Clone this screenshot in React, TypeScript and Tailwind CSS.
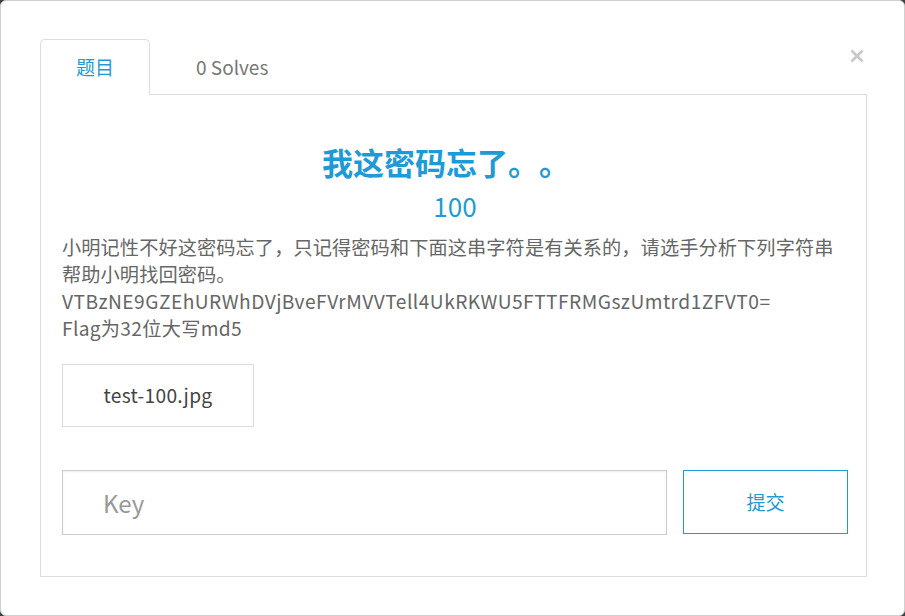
import React from "react";

const font = { fontFamily: '"Noto Sans CJK SC", "Noto Sans", sans-serif' };

export default function App() {
  return (
    <div className="w-[905px] h-[616px] bg-[#3a3f44]" style={font}>
      <div className="relative w-[905px] h-[616px] bg-white rounded-[6px] border border-[#d0d0d0] pt-[38px] pl-[39px] pr-[37px]">
        <svg className="absolute left-[849px] top-[48px]" width="14" height="14" viewBox="0 0 14 14">
          <path d="M1.5 1.5 L12.5 12.5 M12.5 1.5 L1.5 12.5" stroke="#c9c9c9" strokeWidth="2.8" strokeLinecap="butt" />
        </svg>
        <div className="flex h-[56px]">
          <div className="w-[110px] h-[56px] border border-b-0 border-[#dddddd] rounded-t-[5px] bg-white flex items-center justify-center text-[19px] text-[#1e9bd6] relative z-10">
            题目
          </div>
          <div className="pl-[46px] flex items-center text-[19px] text-[#777]">0 Solves</div>
        </div>
        <div className="-mt-px border border-[#dddddd] h-[483px] pl-[21px] pr-[18px]">
          <div className="mt-[47px] text-center text-[31px] leading-[40px] font-bold text-[#1e9bd6] [text-spacing-trim:space-all] pr-[18px]">
            我这密码忘了。。
          </div>
          <div className="mt-[7px] text-center text-[26px] leading-[34px] text-[#1e9bd6]">100</div>
          <div className="mt-[11px] text-[19.2px] leading-[27px] text-[#666] tracking-[0.1px]">
            小明记性不好这密码忘了，只记得密码和下面这串字符是有关系的，请选手分析下列字符串帮助小明找回密码。
            <br />
            <span className="tracking-[0.45px]">VTBzNE9GZEhURWhDVjBveFVrMVVTell4UkRKWU5FTTFRMGszUmtrd1ZFVT0=</span>
            <br />
            <span className="tracking-[0.3px]">Flag为32位大写md5</span>
          </div>
          <div className="mt-[22px] w-[192px] h-[63px] border border-[#dddddd] flex items-center justify-center text-[19.2px] text-[#444] tracking-[0.3px]">
            test-100.jpg
          </div>
          <div className="mt-[43px] flex gap-[16px]">
            <div className="w-[606px] h-[65px] border border-[#cccccc] shadow-[inset_0_1px_2px_rgba(0,0,0,0.08)] flex items-center pl-[40px] text-[24px] text-[#999]">
              Key
            </div>
            <div className="w-[165px] h-[64px] border border-[#1e9bd6] flex items-center justify-center text-[19.2px] text-[#1e9bd6]">
              提交
            </div>
          </div>
        </div>
      </div>
    </div>
  );
}
